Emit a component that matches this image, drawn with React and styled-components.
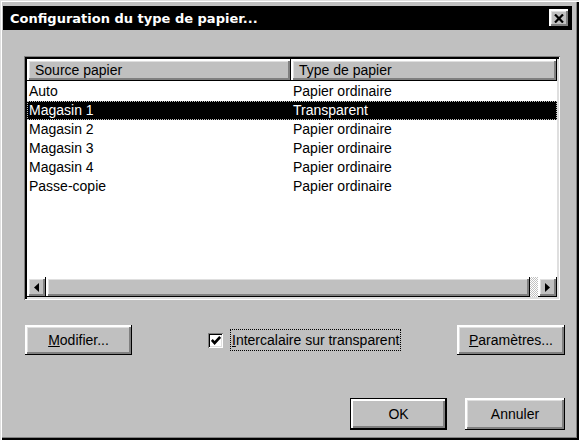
import React from 'react'
import styled, { createGlobalStyle, css } from 'styled-components'

const GlobalStyle = createGlobalStyle`
  html, body {
    margin: 0;
    padding: 0;
    background: #c0c0c0;
  }
  body {
    font-family: "Liberation Sans", Arial, sans-serif;
    font-size: 14px;
    color: #000;
  }
`

const raised = css`
  box-shadow:
    inset -1px -1px 0 #000,
    inset 2px 2px 0 #fff,
    inset -3px -3px 0 #808080,
    inset 3px 3px 0 #dfdfdf;
`

const sunken = css`
  box-shadow:
    inset 1px 1px 0 #808080,
    inset -1px -1px 0 #fff,
    inset 3px 3px 0 #000,
    inset -3px -3px 0 #dfdfdf;
`

const Window = styled.div`
  box-sizing: border-box;
  width: 579px;
  height: 440px;
  padding: 6px 7px 4px 3px;
  background: #c0c0c0;
  display: flex;
  flex-direction: column;
  box-shadow:
    inset 1px 1px 0 #dfdfdf,
    inset 2px 2px 0 #fff,
    inset -2px -2px 0 #000,
    inset -3px -3px 0 #808080;
`

const TitleBar = styled.div`
  height: 24px;
  background: #000;
  display: flex;
  align-items: center;
  padding: 0 3px 0 7px;
`

const Title = styled.div`
  flex: 1;
  color: #fff;
  font-family: "DejaVu Sans", Verdana, sans-serif;
  font-weight: bold;
  font-size: 13px;
  white-space: nowrap;
`

const CloseButton = styled.div`
  width: 20px;
  height: 18px;
  background: #c0c0c0;
  display: flex;
  align-items: center;
  justify-content: center;
  ${raised}
`

const Body = styled.div`
  flex: 1;
  display: flex;
  flex-direction: column;
  padding: 26px 7px 0 21px;
`

const ListView = styled.div`
  box-sizing: border-box;
  width: 536px;
  height: 244px;
  padding: 3px;
  background: #fff;
  display: flex;
  flex-direction: column;
  ${sunken}
`

const Header = styled.div`
  display: grid;
  grid-template-columns: 264px 1fr;
  height: 22px;
`

const HeaderCell = styled.div`
  background: #c0c0c0;
  display: flex;
  align-items: center;
  padding-left: ${p => p.$indent}px;
  white-space: nowrap;
  ${raised}
`

const Rows = styled.div`
  flex: 1;
  background: #fff;
  padding-top: 1px;
`

const Row = styled.div`
  display: grid;
  grid-template-columns: 264px 1fr;
  height: 19px;
  line-height: 19px;
  background: ${p => (p.$selected ? '#000' : '#fff')};
  color: ${p => (p.$selected ? '#fff' : '#000')};
  outline: ${p => (p.$selected ? '1px dotted #c0c0c0' : 'none')};
  outline-offset: -1px;
`

const Cell = styled.div`
  padding-left: 2px;
  white-space: nowrap;
`

const ScrollBar = styled.div`
  height: 20px;
  display: flex;
  background-color: #c0c0c0;
  background-image: repeating-conic-gradient(#fff 0 25%, #c0c0c0 0 50%);
  background-size: 2px 2px;
`

const ScrollButton = styled.div`
  width: 19px;
  background: #c0c0c0;
  display: flex;
  align-items: center;
  justify-content: center;
  ${raised}
`

const Thumb = styled.div`
  flex: 1;
  margin-right: 8px;
  background: #c0c0c0;
  ${raised}
`

const ButtonRow = styled.div`
  display: flex;
  align-items: center;
  margin-top: 25px;
  padding-left: 1px;
  height: 30px;
`

const Button = styled.div`
  box-sizing: border-box;
  width: ${p => p.$width}px;
  height: ${p => p.$height || 30}px;
  background: #c0c0c0;
  display: flex;
  align-items: center;
  justify-content: center;
  white-space: nowrap;
  ${p =>
    p.$default
      ? css`
          box-shadow:
            inset 0 0 0 1px #000,
            inset -2px -2px 0 #000,
            inset 3px 3px 0 #fff,
            inset -4px -4px 0 #808080;
        `
      : raised}
`

const CheckGroup = styled.div`
  display: flex;
  align-items: center;
  margin-left: 76px;
`

const CheckBox = styled.div`
  width: 15px;
  height: 15px;
  background: #fff;
  display: flex;
  align-items: center;
  justify-content: center;
  box-shadow:
    inset 1px 1px 0 #808080,
    inset -1px -1px 0 #fff,
    inset 2px 2px 0 #000,
    inset -2px -2px 0 #dfdfdf;
`

const CheckLabel = styled.div`
  margin-left: 8px;
  padding: 0 1px;
  height: 20px;
  line-height: 20px;
  outline: 1px dotted #000;
  white-space: nowrap;
`

const Spacer = styled.div`
  flex: 1;
`

const BottomRow = styled.div`
  display: flex;
  justify-content: flex-end;
  gap: 18px;
  margin-top: 43px;
`

const rows = [
  ['Auto', 'Papier ordinaire'],
  ['Magasin 1', 'Transparent'],
  ['Magasin 2', 'Papier ordinaire'],
  ['Magasin 3', 'Papier ordinaire'],
  ['Magasin 4', 'Papier ordinaire'],
  ['Passe-copie', 'Papier ordinaire'],
]

const Arrow = ({ dir }) => (
  <svg width="5" height="9" viewBox="0 0 5 9">
    {dir === 'left' ? <path d="M5 0 L0 4.5 L5 9 Z" fill="#000" /> : <path d="M0 0 L5 4.5 L0 9 Z" fill="#000" />}
  </svg>
)

const App = () => {
  return (
    <>
      <GlobalStyle />
      <Window>
        <TitleBar>
          <Title>Configuration du type de papier...</Title>
          <CloseButton>
            <svg width="10" height="9" viewBox="0 0 10 9">
              <path d="M1 0.5 L9 8.5 M9 0.5 L1 8.5" stroke="#000" strokeWidth="2.2" />
            </svg>
          </CloseButton>
        </TitleBar>

        <Body>
          <ListView>
            <Header>
              <HeaderCell $indent={8}>Source papier</HeaderCell>
              <HeaderCell $indent={8}>Type de papier</HeaderCell>
            </Header>
            <Rows>
              {rows.map(([src, type], i) => (
                <Row key={src} $selected={i === 1}>
                  <Cell>{src}</Cell>
                  <Cell>{type}</Cell>
                </Row>
              ))}
            </Rows>
            <ScrollBar>
              <ScrollButton>
                <Arrow dir="left" />
              </ScrollButton>
              <Thumb />
              <ScrollButton>
                <Arrow dir="right" />
              </ScrollButton>
            </ScrollBar>
          </ListView>

          <ButtonRow>
            <Button $width={107}>
              <u>M</u>odifier...
            </Button>
            <CheckGroup>
              <CheckBox>
                <svg width="10" height="9" viewBox="0 0 10 9">
                  <path d="M0.8 4 L3.6 7 L9.2 1" stroke="#000" strokeWidth="2.6" fill="none" />
                </svg>
              </CheckBox>
              <CheckLabel>
                <u>I</u>ntercalaire sur transparent
              </CheckLabel>
            </CheckGroup>
            <Spacer />
            <Button $width={108}>
              <u>P</u>aramètres...
            </Button>
          </ButtonRow>

          <BottomRow>
            <Button $width={97} $height={32} $default>
              OK
            </Button>
            <Button $width={100} $height={32}>
              Annuler
            </Button>
          </BottomRow>
        </Body>
      </Window>
    </>
  )
}

export default App
